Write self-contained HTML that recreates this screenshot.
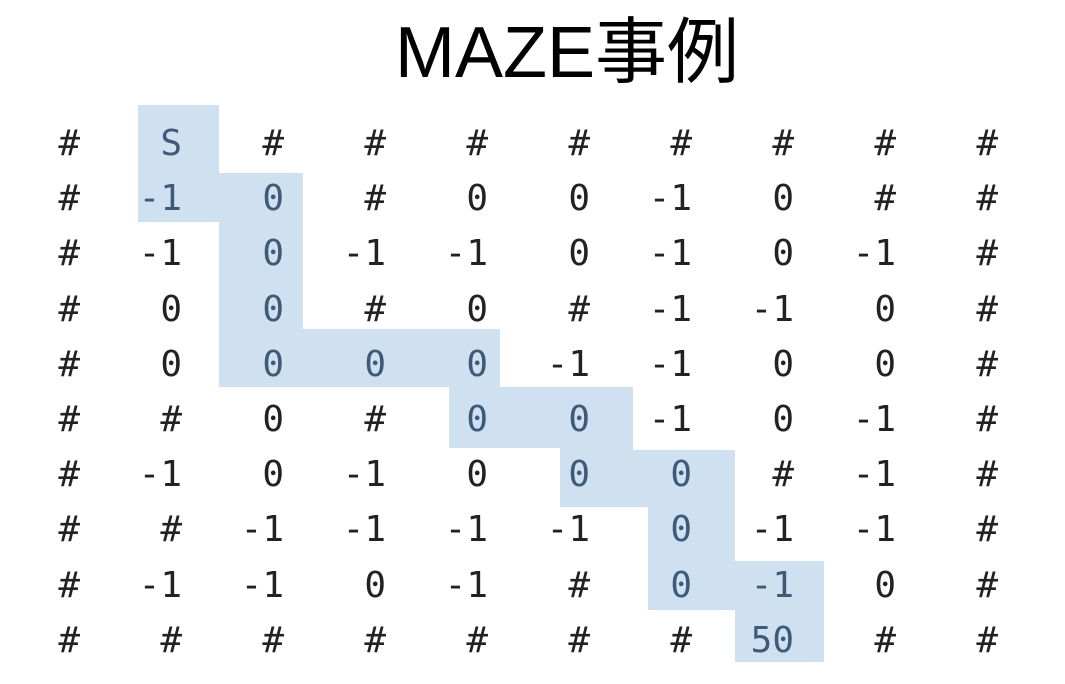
<!DOCTYPE html>
<html><head><meta charset="utf-8"><style>
body{margin:0;width:1065px;height:684px;background:#fff;position:relative;overflow:hidden}
.t{position:absolute;left:395px;top:8px;white-space:nowrap;font:72px/90px "Liberation Sans","Noto Sans CJK JP",sans-serif;color:#000}
.h{position:absolute;background:#cfe0f0}
.c{position:absolute;width:90px;text-align:right;font:36px/40px "DejaVu Sans Mono","Liberation Mono",monospace;color:#222}
</style></head><body>
<div class="t">MAZE事例</div>
<div class="h" style="left:138px;top:105px;width:81px;height:117px"></div>
<div class="h" style="left:219px;top:173px;width:84px;height:214px"></div>
<div class="h" style="left:303px;top:329px;width:197px;height:58px"></div>
<div class="h" style="left:449px;top:329px;width:51px;height:119px"></div>
<div class="h" style="left:449px;top:387px;width:184px;height:61px"></div>
<div class="h" style="left:560px;top:387px;width:73px;height:120px"></div>
<div class="h" style="left:560px;top:450px;width:175px;height:57px"></div>
<div class="h" style="left:648px;top:450px;width:87px;height:160px"></div>
<div class="h" style="left:648px;top:561px;width:176px;height:49px"></div>
<div class="h" style="left:735px;top:561px;width:89px;height:101px"></div>
<div id="g"></div>
<script>
var d=[
"# S # # # # # # # #",
"# -1 0 # 0 0 -1 0 # #",
"# -1 0 -1 -1 0 -1 0 -1 #",
"# 0 0 # 0 # -1 -1 0 #",
"# 0 0 0 0 -1 -1 0 0 #",
"# # 0 # 0 0 -1 0 -1 #",
"# -1 0 -1 0 0 0 # -1 #",
"# # -1 -1 -1 -1 0 -1 -1 #",
"# -1 -1 0 -1 # 0 -1 0 #",
"# # # # # # # 50 # #"];
var hl={"0,1":1,"1,1":1,"1,2":1,"2,2":1,"3,2":1,"4,2":1,"4,3":1,"4,4":1,"5,4":1,"5,5":1,"6,5":1,"6,6":1,"7,6":1,"8,6":1,"8,7":1,"9,7":1};
var h="";
for(var r=0;r<10;r++){var a=d[r].split(" ");for(var c=0;c<10;c++){
var x=80+102*c-90,y=124+55.2*r;
h+='<div class="c" style="left:'+x+'px;top:'+y+'px;'+(hl[r+","+c]?'color:#3d5a78':'')+'">'+a[c]+'</div>';}}
document.getElementById("g").innerHTML=h;
</script>
</body></html>
